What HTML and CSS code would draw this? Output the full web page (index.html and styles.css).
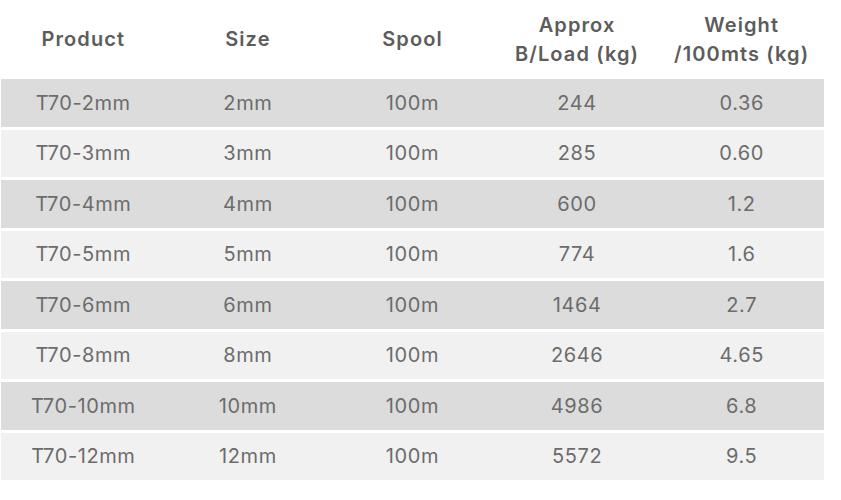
FILE: index.html
```html
<!DOCTYPE html>
<html>
<head>
<meta charset="utf-8">
<link rel="stylesheet" href="styles.css">
</head>
<body>
<table class="spec">
  <thead>
    <tr>
      <th>Product</th>
      <th>Size</th>
      <th>Spool</th>
      <th>Approx<br>B/Load (kg)</th>
      <th>Weight<br>/100mts (kg)</th>
    </tr>
  </thead>
  <tbody>
    <tr class="dark"><td>T70-2mm</td><td>2mm</td><td>100m</td><td>244</td><td>0.36</td></tr>
    <tr class="light"><td>T70-3mm</td><td>3mm</td><td>100m</td><td>285</td><td>0.60</td></tr>
    <tr class="dark"><td>T70-4mm</td><td>4mm</td><td>100m</td><td>600</td><td>1.2</td></tr>
    <tr class="light"><td>T70-5mm</td><td>5mm</td><td>100m</td><td>774</td><td>1.6</td></tr>
    <tr class="dark"><td>T70-6mm</td><td>6mm</td><td>100m</td><td>1464</td><td>2.7</td></tr>
    <tr class="light"><td>T70-8mm</td><td>8mm</td><td>100m</td><td>2646</td><td>4.65</td></tr>
    <tr class="dark"><td>T70-10mm</td><td>10mm</td><td>100m</td><td>4986</td><td>6.8</td></tr>
    <tr class="light"><td>T70-12mm</td><td>12mm</td><td>100m</td><td>5572</td><td>9.5</td></tr>
  </tbody>
</table>
</body>
</html>
```
FILE: styles.css
```css
html, body {
  margin: 0;
  padding: 0;
  background: #ffffff;
}
body {
  font-family: "Inter", "Liberation Sans", sans-serif;
}
.spec {
  margin-left: 1px;
  width: 823px;
  border-collapse: separate;
  border-spacing: 0 3px;
  table-layout: fixed;
}
.spec th {
  height: 73px;
  padding: 0;
  font-size: 20px;
  font-weight: 600;
  letter-spacing: 1.1px;
  line-height: 29px;
  color: #5c5c5c;
  text-align: center;
  vertical-align: middle;
}
.spec td {
  height: 47.5px;
  padding: 0;
  font-size: 20px;
  font-weight: 400;
  letter-spacing: 0.6px;
  color: #6c6c6c;
  text-align: center;
  vertical-align: middle;
}
.spec .dark td {
  background: #dcdcdc;
}
.spec .light td {
  background: #f2f1f1;
}
```
